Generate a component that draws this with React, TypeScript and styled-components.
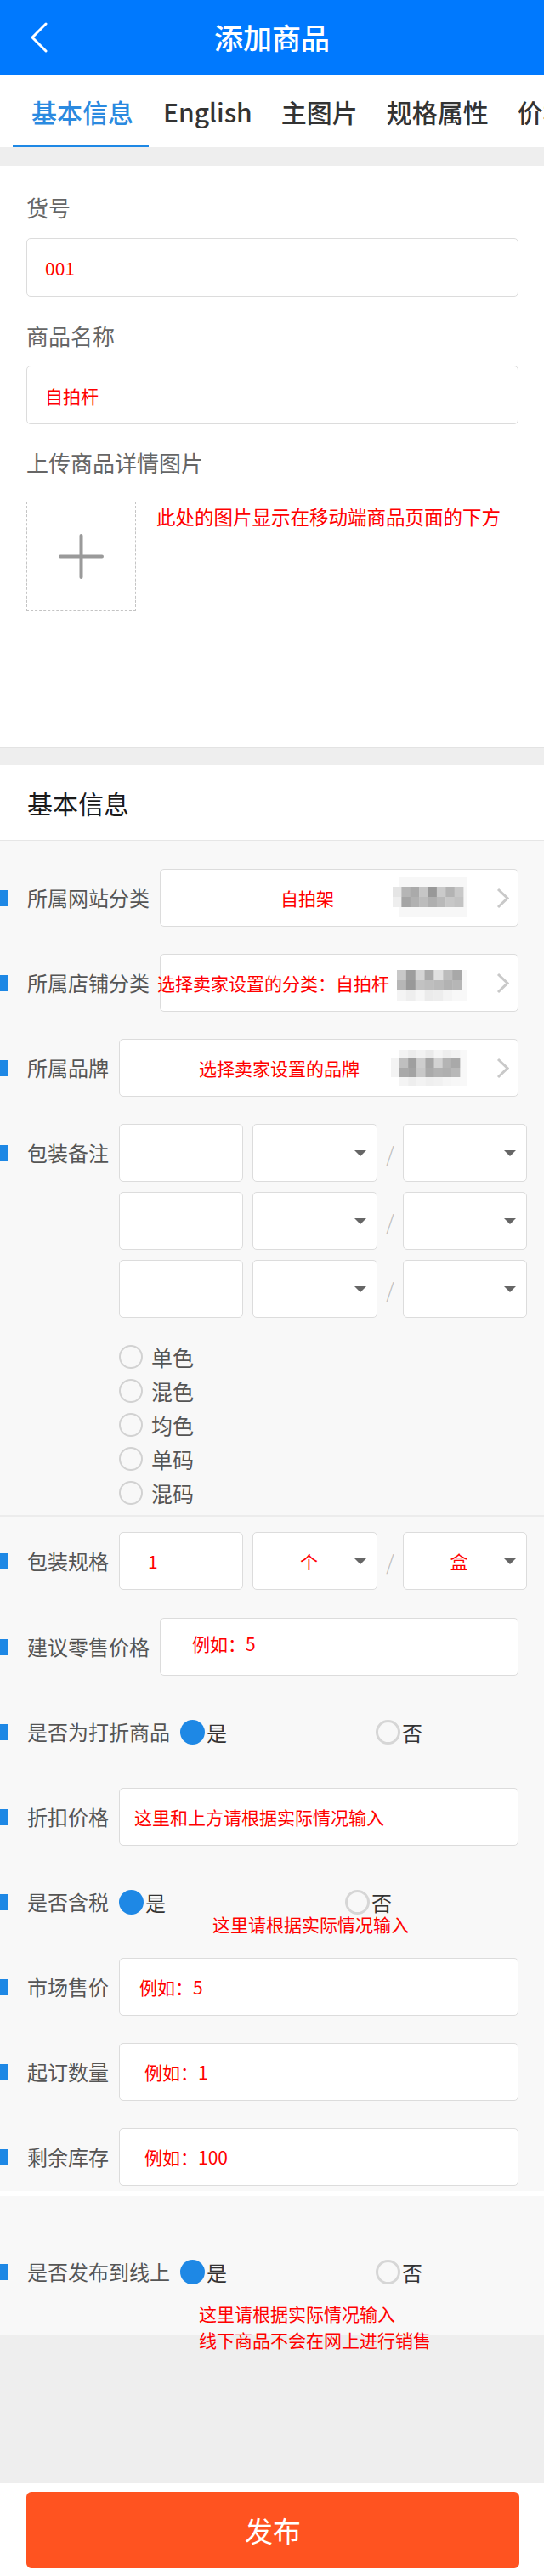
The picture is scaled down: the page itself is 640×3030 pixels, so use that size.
import React from "react";
import styled, { createGlobalStyle } from "styled-components";

const GlobalStyle = createGlobalStyle`
  * { box-sizing: border-box; }
  html, body { margin: 0; padding: 0; background: #fff; }
  body {
    font-family: "Noto Sans CJK SC", "Noto Sans", sans-serif;
    -webkit-font-smoothing: antialiased;
  }
`;

const Page = styled.div`
  width: 640px;
  background: #fff;
`;

/* ---------- header ---------- */
const Header = styled.header`
  height: 88px;
  background: #0079fe;
  display: grid;
  grid-template-columns: 88px 1fr 88px;
  align-items: center;
`;
const BackButton = styled.div`
  padding-left: 36px;
  display: flex;
  align-items: center;
`;
const Title = styled.h1`
  margin: 0;
  text-align: center;
  color: #fff;
  font-size: 34px;
  font-weight: 500;
  line-height: 88px;
`;

/* ---------- tabs ---------- */
const TabBar = styled.nav`
  height: 85px;
  display: flex;
  padding-left: 15px;
  overflow: hidden;
  white-space: nowrap;
  background: #fff;
`;
const Tab = styled.div<{ $active?: boolean }>`
  flex: none;
  height: 100%;
  padding: ${(p) => (p.$active ? "0 18px 0 22px" : "0 17px")};
  display: flex;
  align-items: center;
  font-size: 30px;
  font-weight: 500;
  color: ${(p) => (p.$active ? "#2b8ae0" : "#333")};
  box-shadow: ${(p) => (p.$active ? "inset 0 -3px 0 #1e88e5" : "none")};
`;

const Band = styled.div<{ $h: number; $bg?: string }>`
  height: ${(p) => p.$h}px;
  background: ${(p) => p.$bg ?? "#eeeeee"};
`;

/* ---------- section 1 ---------- */
const InfoSection = styled.section`
  background: #fff;
  padding: 31px 30px 160px 31px;
  border-bottom: 1px solid #e3e3e3;
  display: flex;
  flex-direction: column;
`;
const FieldLabel = styled.div<{ $mt?: number }>`
  font-size: 26px;
  line-height: 36px;
  color: #666;
  margin-top: ${(p) => p.$mt ?? 0}px;
`;
const TextBox = styled.div<{ $mt?: number; $pl?: number; $raise?: number }>`
  flex: 1 1 auto;
  min-width: 0;
  height: ${(p) => (p.$mt !== undefined ? 69 : 68)}px;
  margin-top: ${(p) => p.$mt ?? 0}px;
  background: #fff;
  border: 1px solid #dcdcdc;
  border-radius: 5px;
  display: flex;
  align-items: center;
  padding-left: ${(p) => p.$pl ?? 21}px;
  padding-bottom: ${(p) => p.$raise ?? 0}px;
  font-size: 21px;
  color: #ff0000;
  white-space: nowrap;
`;
const UploadRow = styled.div`
  display: flex;
  align-items: flex-start;
  gap: 24px;
  margin-top: 28px;
`;
const UploadBox = styled.div`
  flex: none;
  width: 129px;
  height: 129px;
  border: 1px dashed #c4c4c4;
  display: flex;
  align-items: center;
  justify-content: center;
`;
const RedNote = styled.div`
  margin-top: 2px;
  color: #ff0000;
  font-size: 22.5px;
  line-height: 30px;
  white-space: nowrap;
`;

/* ---------- section 2 ---------- */
const SectionTitle = styled.h2`
  margin: 0;
  height: 89px;
  line-height: 88px;
  padding-left: 32px;
  font-size: 30px;
  font-weight: 400;
  color: #1a1a1a;
  background: #fff;
  border-bottom: 1px solid #e6e6e6;
`;
const Form = styled.div`
  background: #f8f8f8;
  padding: 33px 0 6px;
  display: flex;
  flex-direction: column;
`;
const Row = styled.div<{ $mt?: number; $pr?: number; $divider?: boolean }>`
  display: flex;
  align-items: flex-start;
  margin-top: ${(p) => p.$mt ?? 32}px;
  padding-right: ${(p) => p.$pr ?? 30}px;
  border-bottom: ${(p) => (p.$divider ? "2px solid #ececec" : "none")};
`;
const LabelCell = styled.div`
  flex: none;
  height: 68px;
  display: flex;
  align-items: center;
  margin-right: 12px;
`;
const Marker = styled.span`
  width: 10px;
  height: 19px;
  background: #1e88e5;
  margin-right: 22px;
`;
const RowLabel = styled.span`
  font-size: 24px;
  line-height: 1;
  color: #555;
  white-space: nowrap;
`;

/* link-select */
const LinkBox = styled.div`
  flex: 1;
  min-width: 0;
  height: 68px;
  background: #fff;
  border: 1px solid #dcdcdc;
  border-radius: 5px;
  display: flex;
  align-items: center;
  padding-right: 10px;
`;
const LinkText = styled.span<{ $ml: number }>`
  flex: 1;
  min-width: 0;
  margin-left: ${(p) => p.$ml}px;
  color: #ff0000;
  font-size: 21px;
  white-space: nowrap;
`;
const MosaicSvg = styled.svg`
  flex: none;
  display: block;
`;
const Chevron = styled.svg`
  flex: none;
  margin-left: 34px;
  display: block;
`;

/* package grid */
const PackBody = styled.div`
  display: flex;
  flex-direction: column;
  gap: 12px;
`;
const PackLine = styled.div`
  display: flex;
  align-items: center;
`;
const PlainBox = styled.div<{ $pl?: number }>`
  flex: none;
  width: 146px;
  height: 68px;
  background: #fff;
  border: 1px solid #dcdcdc;
  border-radius: 5px;
  display: flex;
  align-items: center;
  padding-left: ${(p) => p.$pl ?? 0}px;
  color: #ff0000;
  font-size: 21px;
`;
const DropBox = styled.div<{ $w: number; $ml?: number }>`
  flex: none;
  width: ${(p) => p.$w}px;
  margin-left: ${(p) => p.$ml ?? 0}px;
  height: 68px;
  background: #fff;
  border: 1px solid #dcdcdc;
  border-radius: 5px;
  display: flex;
  align-items: center;
  padding: 0 12px;
`;
const DropValue = styled.span`
  flex: 1;
  text-align: center;
  color: #ff0000;
  font-size: 21px;
`;
const Caret = styled.span`
  flex: none;
  width: 0;
  height: 0;
  border-left: 7px solid transparent;
  border-right: 7px solid transparent;
  border-top: 7px solid #666;
`;
const Slash = styled.span`
  flex: none;
  width: 30px;
  text-align: center;
  color: #bbb;
  font-size: 24px;
  font-weight: 300;
`;
const OptionList = styled.div`
  margin-top: 14px;
  height: 206px;
  overflow: hidden;
  display: flex;
  flex-direction: column;
`;
const OptionItem = styled.div`
  height: 40px;
  flex: none;
  display: flex;
  align-items: center;
  gap: 10px;
  font-size: 25px;
  color: #555;
`;
const Ring = styled.span<{ $w?: number }>`
  flex: none;
  width: 28px;
  height: 28px;
  border-radius: 50%;
  border: ${(p) => p.$w ?? 2}px solid #d2d2d2;
`;

/* binary radio */
const ChoiceCol = styled.div`
  flex: 1;
  min-width: 0;
  margin-right: -62px;
  display: flex;
  flex-direction: column;
`;
const ChoiceGroup = styled.div`
  height: 68px;
  display: flex;
  align-items: center;
`;
const Choice = styled.div`
  flex: 1;
  display: flex;
  align-items: center;
  gap: 2px;
  font-size: 24px;
  color: #333;
`;
const Dot = styled.span<{ $on?: boolean }>`
  flex: none;
  width: 29px;
  height: 29px;
  border-radius: 50%;
  background: ${(p) => (p.$on ? "#1e88e5" : "transparent")};
  border: ${(p) => (p.$on ? "none" : "3px solid #d6d6d6")};
`;
const InlineNote = styled.div`
  margin: -19px 0 -3px 110px;
  line-height: 22px;
  font-size: 21px;
  color: #ff0000;
  white-space: nowrap;
`;

/* ---------- section 3 ---------- */
const PublishSection = styled.section`
  height: 164px;
  background: #f8f8f8;
  padding-top: 55px;
`;
const PublishNote = styled.div`
  padding-left: 234px;
  font-size: 21px;
  line-height: 31px;
  color: #ff0000;
  white-space: nowrap;
`;

/* ---------- footer ---------- */
const Footer = styled.footer`
  background: #fff;
  padding: 10px 29px 9px 31px;
`;
const SubmitButton = styled.button`
  display: block;
  width: 100%;
  height: 90px;
  border: none;
  border-radius: 6px;
  background: #ff5320;
  color: #fff;
  font-family: inherit;
  font-size: 33px;
  cursor: pointer;
`;

/* ---------- drawings ---------- */
type Cell = [number, number, number, number, string];

function grid(x0: number, y: number, w: number, h: number, colors: string[]): Cell[] {
  return colors.map((c, i) => [x0 + i * w, y, w + 0.4, h, c] as Cell);
}

const mosaics: Cell[][] = [
  [
    [10, 0, 82, 12, "#f7f7f7"],
    [10, 36, 82, 12, "#f7f7f7"],
    [85, 12, 7, 24, "#f6f6f6"],
    ...grid(2, 12, 10.375, 12, ["#e5e5e5", "#b5b5b5", "#aaaaaa", "#c6c6c6", "#989898", "#cacaca", "#b3b3b3", "#c8c8c8"]),
    ...grid(2, 24, 10.375, 12, ["#eeeeee", "#a5a5a5", "#b1b1b1", "#bcbcbc", "#afafaf", "#b9b9b9", "#c7c7c7", "#c2c2c2"]),
  ],
  [
    [83, 10, 7, 36, "#f8f8f8"],
    ...grid(7, 10, 10.86, 12, ["#c8c8c8", "#9e9e9e", "#d4d4d4", "#aaaaaa", "#e0e0e0", "#bcbcbc", "#a8a8a8"]),
    ...grid(7, 22, 10.86, 12, ["#b6b6b6", "#999999", "#c2c2c2", "#bebebe", "#bababa", "#b2b2b2", "#b6b6b6"]),
    ...grid(7, 34, 10.86, 12, ["#f4f4f4", "#eeeeee", "#f6f6f6", "#ebebeb", "#ededed", "#f4f4f4", "#f8f8f8"]),
  ],
  [
    [0, 14, 10, 22, "#f3f3f3"],
    [81, 4, 9, 42, "#f8f8f8"],
    ...grid(10, 4, 10.14, 10, ["#f3f3f3", "#ececec", "#f2f2f2", "#eaeaea", "#f5f5f5", "#eeeeee", "#f2f2f2"]),
    ...grid(10, 14, 10.14, 11, ["#bfbfbf", "#9f9f9f", "#cdcdcd", "#a6a6a6", "#d2d2d2", "#b4b4b4", "#a9a9a9"]),
    ...grid(10, 25, 10.14, 11, ["#a9a9a9", "#a3a3a3", "#c8c8c8", "#aaaaaa", "#b2b2b2", "#afafaf", "#b8b8b8"]),
    ...grid(10, 36, 10.14, 10, ["#f4f4f4", "#eeeeee", "#f3f3f3", "#efefef", "#f1f1f1", "#f5f5f5", "#f7f7f7"]),
  ],
];

const Mosaic = ({ index }: { index: number }) => (
  <MosaicSvg width="90" height="50" viewBox="0 0 90 50" aria-hidden>
    {mosaics[index].map(([x, y, w, h, c], i) => (
      <rect key={i} x={x} y={y} width={w} height={h} fill={c} />
    ))}
  </MosaicSvg>
);

const ChevronRight = () => (
  <Chevron width="15" height="25" viewBox="0 0 15 25" aria-hidden>
    <polyline points="2,2 13,12.5 2,23" fill="none" stroke="#c9c9c9" strokeWidth="3" />
  </Chevron>
);

const BackIcon = () => (
  <svg width="20" height="36" viewBox="0 0 20 36" aria-hidden>
    <polyline points="18,2 2,18 18,34" fill="none" stroke="#fff" strokeWidth="3" strokeLinecap="round" strokeLinejoin="round" />
  </svg>
);

const PlusIcon = () => (
  <svg width="53" height="53" viewBox="0 0 53 53" aria-hidden>
    <line x1="2" y1="26.5" x2="51" y2="26.5" stroke="#9a9a9a" strokeWidth="4" strokeLinecap="round" />
    <line x1="26.5" y1="2" x2="26.5" y2="51" stroke="#9a9a9a" strokeWidth="4" strokeLinecap="round" />
  </svg>
);

/* ---------- pieces ---------- */
const Label = ({ children }: { children: React.ReactNode }) => (
  <LabelCell>
    <Marker />
    <RowLabel>{children}</RowLabel>
  </LabelCell>
);

const LinkRow = ({ label, text, ml, mosaic, mt }: { label: string; text: string; ml: number; mosaic: number; mt?: number }) => (
  <Row $mt={mt}>
    <Label>{label}</Label>
    <LinkBox>
      <LinkText $ml={ml}>{text}</LinkText>
      <Mosaic index={mosaic} />
      <ChevronRight />
    </LinkBox>
  </Row>
);

const PackSet = ({ num, a, b }: { num?: string; a?: string; b?: string }) => (
  <PackLine>
    <PlainBox $pl={num ? 33 : 0}>{num}</PlainBox>
    <DropBox $w={147} $ml={11}>
      <DropValue>{a}</DropValue>
      <Caret />
    </DropBox>
    <Slash>/</Slash>
    <DropBox $w={146}>
      <DropValue>{b}</DropValue>
      <Caret />
    </DropBox>
  </PackLine>
);

const YesNo = () => (
  <ChoiceGroup>
    <Choice>
      <Dot $on />是
    </Choice>
    <Choice>
      <Dot />否
    </Choice>
  </ChoiceGroup>
);

const tabs = ["基本信息", "English", "主图片", "规格属性", "价格"];

export default function App() {
  return (
    <Page>
      <GlobalStyle />
      <Header>
        <BackButton>
          <BackIcon />
        </BackButton>
        <Title>添加商品</Title>
        <span />
      </Header>

      <TabBar>
        {tabs.map((t, i) => (
          <Tab key={t} $active={i === 0}>
            {t}
          </Tab>
        ))}
      </TabBar>
      <Band $h={22} />

      <InfoSection>
        <FieldLabel>货号</FieldLabel>
        <TextBox $mt={18}>001</TextBox>
        <FieldLabel $mt={28}>商品名称</FieldLabel>
        <TextBox $mt={17}>自拍杆</TextBox>
        <FieldLabel $mt={27}>上传商品详情图片</FieldLabel>
        <UploadRow>
          <UploadBox>
            <PlusIcon />
          </UploadBox>
          <RedNote>此处的图片显示在移动端商品页面的下方</RedNote>
        </UploadRow>
      </InfoSection>
      <Band $h={20} />

      <SectionTitle>基本信息</SectionTitle>
      <Form>
        <LinkRow label="所属网站分类" text="自拍架" ml={141} mosaic={0} mt={0} />
        <LinkRow label="所属店铺分类" text="选择卖家设置的分类：自拍杆" ml={-4} mosaic={1} />
        <LinkRow label="所属品牌" text="选择卖家设置的品牌" ml={93} mosaic={2} />

        <Row $pr={20} $divider>
          <Label>包装备注</Label>
          <PackBody>
            <PackSet />
            <PackSet />
            <PackSet />
            <OptionList>
              {["单色", "混色", "均色", "单码", "混码"].map((o) => (
                <OptionItem key={o}>
                  <Ring />
                  {o}
                </OptionItem>
              ))}
            </OptionList>
          </PackBody>
        </Row>

        <Row $mt={18} $pr={20}>
          <Label>包装规格</Label>
          <PackSet num="1" a="个" b="盒" />
        </Row>

        <Row $mt={33}>
          <Label>建议零售价格</Label>
          <TextBox $pl={37} $raise={9}>例如：5</TextBox>
        </Row>

        <Row>
          <Label>是否为打折商品</Label>
          <ChoiceCol>
            <YesNo />
          </ChoiceCol>
        </Row>

        <Row>
          <Label>折扣价格</Label>
          <TextBox $pl={17}>这里和上方请根据实际情况输入</TextBox>
        </Row>

        <Row>
          <Label>是否含税</Label>
          <ChoiceCol>
            <YesNo />
            <InlineNote>这里请根据实际情况输入</InlineNote>
          </ChoiceCol>
        </Row>

        <Row>
          <Label>市场售价</Label>
          <TextBox $pl={23}>例如：5</TextBox>
        </Row>
        <Row>
          <Label>起订数量</Label>
          <TextBox $pl={29}>例如：1</TextBox>
        </Row>
        <Row>
          <Label>剩余库存</Label>
          <TextBox $pl={29}>例如：100</TextBox>
        </Row>
      </Form>
      <Band $h={6} $bg="#ffffff" />

      <PublishSection>
        <Row $mt={0}>
          <Label>是否发布到线上</Label>
          <ChoiceCol>
            <YesNo />
          </ChoiceCol>
        </Row>
        <PublishNote>
          这里请根据实际情况输入
          <br />
          线下商品不会在网上进行销售
        </PublishNote>
      </PublishSection>
      <Band $h={174} />

      <Footer>
        <SubmitButton type="button">发布</SubmitButton>
      </Footer>
    </Page>
  );
}
